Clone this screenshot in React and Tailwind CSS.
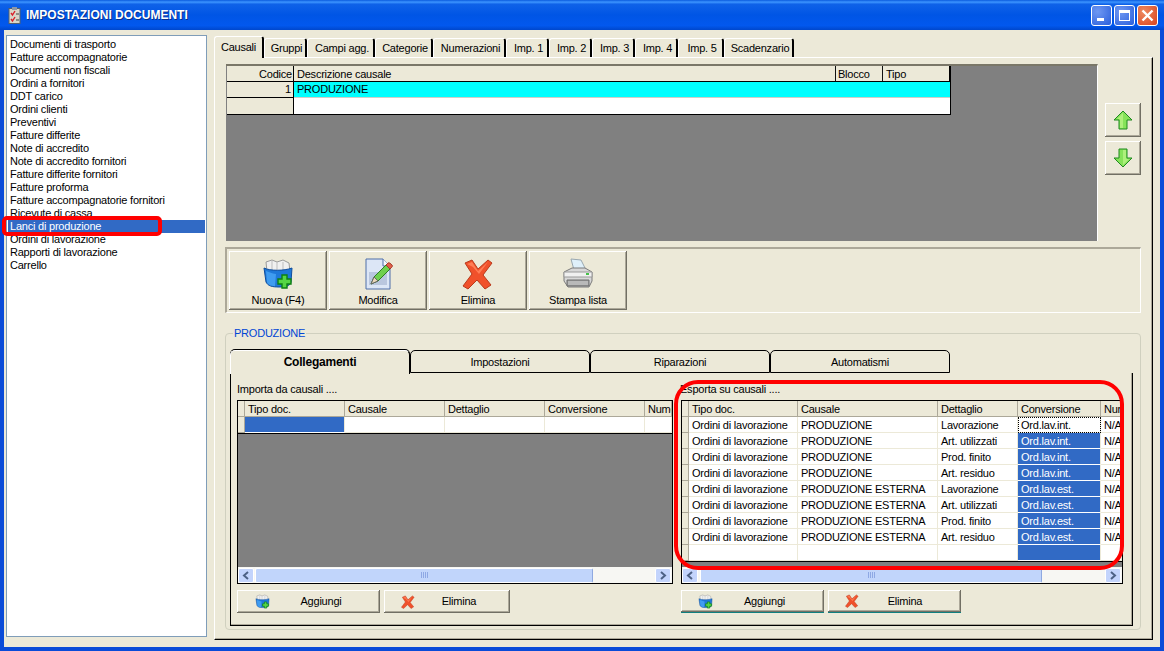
import React from "react";

const bevel = "shadow-[inset_-1px_-1px_0_#716f64,inset_1px_1px_0_#ffffff,inset_-2px_-2px_0_#aca899]";

const docs = ["Documenti di trasporto","Fatture accompagnatorie","Documenti non fiscali","Ordini a fornitori","DDT carico","Ordini clienti","Preventivi","Fatture differite","Note di accredito","Note di accredito fornitori","Fatture differite fornitori","Fatture proforma","Fatture accompagnatorie fornitori","Ricevute di cassa","Lanci di produzione","Ordini di lavorazione","Rapporti di lavorazione","Carrello"];
const topTabs = [["Causali",50],["Gruppi",43],["Campi agg.",68],["Categorie",58],["Numerazioni",73],["Imp. 1",43],["Imp. 2",43],["Imp. 3",43],["Imp. 4",43],["Imp. 5",46],["Scadenzario",70]];
const exportRows = [
  ["PRODUZIONE","Lavorazione","Ord.lav.int."],["PRODUZIONE","Art. utilizzati","Ord.lav.int."],["PRODUZIONE","Prod. finito","Ord.lav.int."],["PRODUZIONE","Art. residuo","Ord.lav.int."],
  ["PRODUZIONE ESTERNA","Lavorazione","Ord.lav.est."],["PRODUZIONE ESTERNA","Art. utilizzati","Ord.lav.est."],["PRODUZIONE ESTERNA","Prod. finito","Ord.lav.est."],["PRODUZIONE ESTERNA","Art. residuo","Ord.lav.est."],
];

function NewIcon({ s = 32 }) {
  return (
    <svg width={s} height={s} viewBox="0 0 32 32">
      <path d="M4 4l6-2 5 2 6-2 6 3 1 9H5z" fill="#f0f0f0" stroke="#9a9a9a" />
      <path d="M10 3v9M15 4v9M21 4v8" stroke="#bdbdbd" />
      <path d="M2 10c6 3 20 3 28 0l-1 14c-1 4-5 5-12 5-7 0-11-1-13-5z" fill="#1e78d8" stroke="#0f4d9c" />
      <path d="M4 13c5 2 8 3 10 3l-1 12c-4 0-7-1-8-4z" fill="#3f9cf0" />
      <path d="M20 17h5v4h4v5h-4v4h-5v-4h-4v-5h4z" fill="#55d645" stroke="#0e7f12" strokeWidth="1.4" />
    </svg>
  );
}
function EditIcon() {
  return (
    <svg width="32" height="32" viewBox="0 0 32 32">
      <path d="M4 1h17l7 7v23H4z" fill="#dce6f6" stroke="#4f6fa8" />
      <path d="M21 1v7h7" fill="#f6f8fc" stroke="#4f6fa8" />
      <rect x="7" y="14" width="18" height="13" fill="#b9c6de" />
      <path d="M9 26l3-7L24 7l4 4-12 12z" fill="#6fd04e" stroke="#2e7d23" />
      <path d="M24 7l2-2c1-1 3 1 4 2s0 2-1 3l-1 1z" fill="#e0604a" stroke="#a33a2a" />
      <path d="M9 26l3-7 4 4z" fill="#e9d8b8" stroke="#666" />
    </svg>
  );
}
function XIcon({ s = 32 }) {
  return (
    <svg width={s} height={s} viewBox="0 0 32 32">
      <path d="M3 5l7-3 6 9 10-9 4 3-9 12 8 10-6 4-8-9-9 9-5-3 9-12z" fill="#f0512b" stroke="#b93a1c" strokeLinejoin="round" />
      <path d="M5 6l5-2 6 9 10-9-9 12-6-7z" fill="#ff7d55" />
    </svg>
  );
}
function PrinterIcon() {
  return (
    <svg width="32" height="32" viewBox="0 0 32 32">
      <path d="M9 1l10 1 5 10H12z" fill="#dff0fa" stroke="#9aa8b0" />
      <path d="M2 14l8-4h13l7 4v9l-3 6H6l-4-6z" fill="#d8d8d8" stroke="#7b7b7b" />
      <path d="M2 14h28v5H2z" fill="#f0f0f0" stroke="#9a9a9a" />
      <path d="M5 22h22v6H5z" fill="#9d9d9d" stroke="#6f6f6f" />
      <path d="M6 24h20M6 26h20" stroke="#d5d5d5" />
      <rect x="24" y="15" width="3" height="2" fill="#46c04a" />
    </svg>
  );
}
function Arrow({ down }) {
  return (
    <svg width="20" height="20" viewBox="0 0 20 20" style={down ? { transform: "rotate(180deg)" } : undefined}>
      <path d="M10 1l9 9h-5v9H6v-9H1z" fill="#86e35a" stroke="#1f8a1f" />
      <path d="M10 3l-6 6h3v9h3z" fill="#aef07c" />
    </svg>
  );
}
function ScrollBtn({ right }) {
  return (
    <div className="w-[16px] h-[15px] rounded-[2px] bg-[#c3d4fc] border border-[#ffffff] flex items-center justify-center shrink-0">
      <svg width="8" height="9" viewBox="0 0 8 9">
        <path d={right ? "M2 1l4 3.5L2 8" : "M6 1L2 4.5 6 8"} fill="none" stroke="#4d6185" strokeWidth="2" />
      </svg>
    </div>
  );
}
function Scrollbar({ thumb, gap }) {
  return (
    <div className="h-[16px] flex items-center bg-[#f7f7f3] pr-px shrink-0">
      <ScrollBtn />
      <div style={{ width: thumb, marginLeft: gap }} className="h-[15px] rounded-[2px] bg-[#c1d5fb] border border-[#ffffff] border-r-[#8fa9e0] flex items-center justify-center gap-px shrink-0">
        <i className="w-px h-[6px] bg-[#8ea8e4]" /><i className="w-px h-[6px] bg-[#8ea8e4]" /><i className="w-px h-[6px] bg-[#8ea8e4]" /><i className="w-px h-[6px] bg-[#8ea8e4]" />
      </div>
      <div className="flex-1" />
      <ScrollBtn right />
    </div>
  );
}
function Cell({ w, children, selected, focus }) {
  return (
    <div style={{ width: w }} className={`h-[16px] shrink-0 pl-[3px] leading-[17px] whitespace-nowrap overflow-hidden border-r border-b border-[#ece9d8] ${selected ? "bg-[#316ac5] text-white border-b-white" : "bg-white"} ${focus ? "outline-1 outline-dotted outline-black -outline-offset-1" : ""}`}>
      {children}
    </div>
  );
}
function HeadCell({ w, children }) {
  return (
    <div style={{ width: w }} className="h-[16px] shrink-0 pl-[3px] leading-[17px] whitespace-nowrap overflow-hidden border-r border-b border-[#aca899] bg-[#ece9d8]">
      {children}
    </div>
  );
}
function Indicator() {
  return <div className="w-[7px] h-[16px] shrink-0 bg-[#ece9d8] border-r border-b border-[#aca899]" />;
}
function SmallButton({ w, icon, label, pad, teal, endPad }) {
  return (
    <div style={{ width: w }} className={`h-[23px] flex items-center bg-[#ece9d8] ${bevel} ${teal ? "border-b border-[#0f7f7f]" : ""}`}>
      <div style={{ marginLeft: pad }} className="flex items-center">{icon}</div>
      <span style={{ paddingRight: endPad }} className="flex-1 text-center">{label}</span>
    </div>
  );
}
function ToolButton({ icon, label }) {
  return (
    <div className={`w-[98px] h-[59px] flex flex-col items-center pt-[7px] bg-[#ece9d8] ${bevel}`}>
      {icon}
      <span className="mt-[4px] leading-[13px]">{label}</span>
    </div>
  );
}

export default function App() {
  return (
    <div className="relative w-[1164px] h-[651px] overflow-hidden flex flex-col bg-[#0a4bd8] text-[11px] tracking-[-0.22px] text-black font-['Liberation_Sans',Arial,sans-serif]">
      {/* Title bar */}
      <div className="h-[30px] shrink-0 flex items-center pl-[8px] pr-[6px] bg-[linear-gradient(180deg,#0a5bde_0%,#3d95ff_7%,#0f62e8_14%,#0055e5_50%,#0258ee_85%,#0047cc_100%)]">
        <svg width="13" height="17" viewBox="0 0 13 17">
          <rect x="1" y="1.5" width="11" height="15" fill="#d9d6c8" stroke="#55606e" />
          <rect x="4" y="0" width="5" height="3" fill="#8b97a8" />
          <path d="M3 6l1.5 2L7 4M3 12l1.5 2L7 10" fill="none" stroke="#d8202a" strokeWidth="1.4" />
          <path d="M8 7h3M8 13h3" stroke="#444" />
        </svg>
        <span className="ml-[5px] font-bold text-[12px] text-white tracking-normal [text-shadow:1px_1px_0_#0a2f8a]">IMPOSTAZIONI DOCUMENTI</span>
        <div className="flex-1" />
        <div className="flex gap-[2px]">
          <div className="w-[21px] h-[21px] rounded-[3px] border border-white bg-[radial-gradient(circle_at_30%_30%,#6f98f2,#2a5fdc)] flex items-end pl-[5px] pb-[4px]"><i className="block w-[7px] h-[3px] bg-white" /></div>
          <div className="w-[21px] h-[21px] rounded-[3px] border border-white bg-[radial-gradient(circle_at_30%_30%,#6f98f2,#2a5fdc)] flex items-center justify-center"><i className="block w-[11px] h-[11px] border border-white border-t-[3px]" /></div>
          <div className="w-[21px] h-[21px] rounded-[3px] border border-white bg-[radial-gradient(circle_at_30%_30%,#ee8a60,#d8431f)] flex items-center justify-center">
            <svg width="13" height="13" viewBox="0 0 13 13"><path d="M1.5 1.5l10 10M11.5 1.5l-10 10" stroke="#fff" strokeWidth="2.4" /></svg>
          </div>
        </div>
      </div>

      {/* Client */}
      <div className="mx-[4px] mb-[4px] h-[617px] shrink-0 bg-[#ece9d8] flex">
        {/* Side list */}
        <div className="ml-[2px] mt-[5px] w-[201px] h-[602px] shrink-0 bg-white border border-[#7f9db9] pt-[2px] pl-px">
          {docs.map((d, i) => (
            <div key={d} className={`h-[13px] leading-[13px] pl-[2px] mr-px whitespace-nowrap ${i === 14 ? "bg-[#316ac5] text-white" : ""}`}>{d}</div>
          ))}
        </div>

        {/* Tabs + page */}
        <div className="ml-[7px] mt-[7px] w-[939px] shrink-0 flex flex-col">
          <div className="h-[20px] flex items-end">
            {topTabs.map(([t, w], i) => (
              <div key={t} style={{ width: w }} className={`text-center leading-[19px] border-t border-l border-white border-r-2 border-r-black rounded-t-[3px] shrink-0 ${i === 0 ? "h-[22px] mb-[-1px] z-10 bg-[#ece9d8] pt-[1px]" : "h-[19px] pl-[3px]"}`}>{t}</div>
            ))}
          </div>
          <div className="h-[583px] border-t border-l border-white border-r border-r-black border-b border-b-black shadow-[inset_-1px_-1px_0_#aca899]">
            {/* Top area */}
            <div className="flex mt-[6px] ml-[11px]">
              <div className="w-[872px] h-[177px] bg-[#808080] border-t-2 border-[#7a7768] border-r border-r-white">
                <div className="w-[724px] ml-px bg-white border-b border-r border-black">
                  <div className="flex h-[16px] border-b border-black bg-[#ece9d8] border-r-2 border-r-black -mr-px">
                    <div className="w-[67px] text-right pr-px border-r border-black leading-[16px]">Codice</div>
                    <div className="w-[542px] pl-[3px] border-r border-[#111] leading-[16px]">Descrizione causale</div>
                    <div className="w-[47px] pl-[2px] border-r border-[#111] leading-[16px]">Blocco</div>
                    <div className="flex-1 pl-[3px] leading-[16px]">Tipo</div>
                  </div>
                  <div className="flex h-[16px] border-b border-[#cfcfc8]">
                    <div className="w-[67px] h-[16px] text-right pr-[2px] bg-[#ece9d8] border-r border-black border-b border-b-black leading-[15px]">1</div>
                    <div className="flex-1 pl-[3px] bg-[#00ffff] leading-[15px]">PRODUZIONE</div>
                  </div>
                  <div className="flex h-[16px]">
                    <div className="w-[67px] bg-[#ece9d8] border-r border-black" />
                    <div className="flex-1" />
                  </div>
                </div>
              </div>
              <div className="ml-[7px] mt-[39px] flex flex-col gap-[4px]">
                <div className={`w-[36px] h-[34px] flex items-center justify-center ${bevel}`}><Arrow /></div>
                <div className={`w-[36px] h-[34px] flex items-center justify-center ${bevel}`}><Arrow down /></div>
              </div>
            </div>

            {/* Toolbar */}
            <div className="mt-[6px] ml-[10px] w-[916px] h-[66px] border-t-2 border-l-2 border-[#aca899] border-b border-b-white border-r border-r-white pt-[2px] pl-[2px] flex gap-[2px]">
              <ToolButton icon={<NewIcon />} label="Nuova (F4)" />
              <ToolButton icon={<EditIcon />} label="Modifica" />
              <ToolButton icon={<XIcon />} label="Elimina" />
              <ToolButton icon={<PrinterIcon />} label="Stampa lista" />
            </div>

            {/* Group */}
            <fieldset className="mt-[14px] ml-[10px] w-[916px] h-[303px] border border-[#d0d0bf] rounded-[4px] pl-[4px] pr-[6px]">
              <legend className="ml-[3px] px-[1px] text-[#0046d5] leading-[13px]">PRODUZIONE</legend>
              <div className="mt-[10px] h-[23px] flex items-stretch">
                {["Collegamenti","Impostazioni","Riparazioni","Automatismi"].map((t, i) => (
                  <div key={t} className={`w-[180px] shrink-0 text-center rounded-t-[5px] border-t border-l border-r border-black ${i === 0 ? "font-bold text-[12px] leading-[22px] h-[24px] z-10 bg-[#ece9d8] border-t-white border-l-white shadow-[0_-1px_0_#000]" : "leading-[22px] border-b"}`}>{t}</div>
                ))}
              </div>
              <div className="w-[903px] h-[253px] border-l border-black border-r border-b shadow-[inset_-1px_-1px_0_#aca899] pl-[6px] pt-[10px] flex gap-[8px]">
                {/* Left grid */}
                <div className="w-[436px] shrink-0">
                  <div className="h-[17px] leading-[13px]">Importa da causali ....</div>
                  <div className="h-[184px] border border-black flex flex-col bg-[#808080]">
                    <div className="flex"><Indicator /><HeadCell w={100}>Tipo doc.</HeadCell><HeadCell w={100}>Causale</HeadCell><HeadCell w={100}>Dettaglio</HeadCell><HeadCell w={100}>Conversione</HeadCell><HeadCell w={27}>Numerazione</HeadCell></div>
                    <div className="flex border-b border-black"><Indicator /><Cell w={100} selected /><Cell w={100} /><Cell w={100} /><Cell w={100} /><Cell w={27} /></div>
                    <div className="flex-1" />
                    <Scrollbar thumb={338} gap={1} />
                  </div>
                  <div className="flex gap-[4px] mt-[6px]">
                    <SmallButton w={143} pad={18} endPad={8} icon={<NewIcon s={15} />} label="Aggiungi" />
                    <SmallButton w={126} pad={17} endPad={7} icon={<XIcon s={14} />} label="Elimina" />
                  </div>
                </div>
                {/* Right grid */}
                <div className="w-[442px] shrink-0">
                  <div className="h-[17px] leading-[13px] -ml-px">Esporta su causali ....</div>
                  <div className="h-[184px] border border-black flex flex-col bg-[#808080]">
                    <div className="flex"><Indicator /><HeadCell w={109}>Tipo doc.</HeadCell><HeadCell w={140}>Causale</HeadCell><HeadCell w={80}>Dettaglio</HeadCell><HeadCell w={83}>Conversione</HeadCell><HeadCell w={21}>Numerazione</HeadCell></div>
                    {exportRows.map((r, i) => (
                      <div className="flex" key={i}>
                        <Indicator />
                        <Cell w={109}>Ordini di lavorazione</Cell>
                        <Cell w={140}>{r[0]}</Cell>
                        <Cell w={80}>{r[1]}</Cell>
                        <Cell w={83} selected={i > 0} focus={i === 0}>{r[2]}</Cell>
                        <Cell w={21}>N/A</Cell>
                      </div>
                    ))}
                    <div className="flex"><Indicator /><Cell w={109} /><Cell w={140} /><Cell w={80} /><Cell w={83} selected /><Cell w={21} /></div>
                    <div className="flex-1 border-t border-black" />
                    <Scrollbar thumb={342} gap={2} />
                  </div>
                  <div className="flex gap-[4px] mt-[6px]">
                    <SmallButton w={143} pad={17} endPad={8} icon={<NewIcon s={15} />} label="Aggiungi" teal />
                    <SmallButton w={133} pad={17} endPad={10} icon={<XIcon s={14} />} label="Elimina" teal />
                  </div>
                </div>
              </div>
            </fieldset>
          </div>
        </div>
      </div>

      {/* Red annotations */}
      <div className="absolute left-[2px] top-[216px] w-[160px] h-[20px] border-[4px] border-[#ff0000] rounded-[5px]" />
      <div className="absolute left-[674px] top-[380px] w-[450px] h-[190px] border-[4px] border-[#ff0000] rounded-[24px]" />
    </div>
  );
}
